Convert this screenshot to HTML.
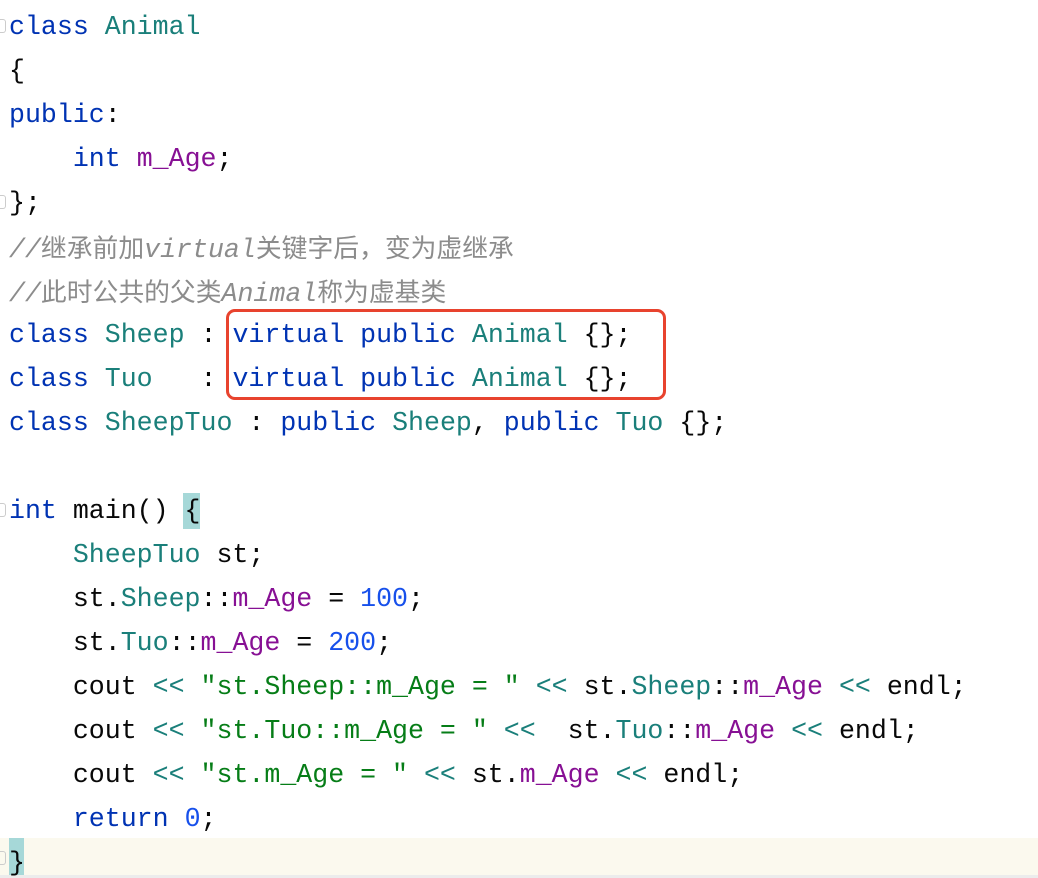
<!DOCTYPE html>
<html><head><meta charset="utf-8"><style>
html,body{margin:0;padding:0;background:#fff;width:1038px;height:878px;overflow:hidden;position:relative}
.code{position:absolute;left:9px;top:5px;font-family:"Liberation Mono","Noto Sans CJK SC",monospace;font-size:26.6px;line-height:44px;color:#080808;white-space:pre}
.l{height:44px}
.k{color:#0033b3}.c{color:#1a7f7a}.m{color:#871094}.n{color:#1750eb}.s{color:#067d17}.o{color:#1a7f7a}
.cm{color:#8c8c8c;font-style:italic}
.cm .z{font-family:"Noto Sans CJK SC",sans-serif;font-style:normal;font-size:25.8px}
.hl{position:absolute;left:0;top:838px;width:1038px;height:37px;background:#fbf9ee}
.bot{position:absolute;left:0;top:875px;width:1038px;height:3px;background:#ececec}
.br{position:absolute;left:9px;top:838px;width:15px;height:37px;background:#a6d8d8}
.br2{position:absolute;left:183px;top:493px;width:17px;height:36px;background:#a6d8d8}
.box{position:absolute;left:226px;top:309px;width:434px;height:85px;border:3px solid #e8432e;border-radius:9px}
.g{position:absolute;left:0;width:5px;height:12px;border:1px solid #ccc;border-left:none;border-radius:0 3px 3px 0}
</style></head><body>
<div class="hl"></div><div class="bot"></div><div class="br"></div><div class="br2"></div>
<div class="g" style="top:19px"></div><div class="g" style="top:195px"></div><div class="g" style="top:503px"></div><div class="g" style="top:851px"></div>
<div class="code"><div class="l"><span class="k">class</span> <span class="c">Animal</span></div><div class="l">{</div><div class="l"><span class="k">public</span>:</div><div class="l">    <span class="k">int</span> <span class="m">m_Age</span>;</div><div class="l">};</div><div class="l cm">//<span class="z">继承前加</span>virtual<span class="z">关键字后，变为虚继承</span></div><div class="l cm">//<span class="z">此时公共的父类</span>Animal<span class="z">称为虚基类</span></div><div class="l"><span class="k">class</span> <span class="c">Sheep</span> : <span class="k">virtual public</span> <span class="c">Animal</span> {};</div><div class="l"><span class="k">class</span> <span class="c">Tuo</span>   : <span class="k">virtual public</span> <span class="c">Animal</span> {};</div><div class="l"><span class="k">class</span> <span class="c">SheepTuo</span> : <span class="k">public</span> <span class="c">Sheep</span>, <span class="k">public</span> <span class="c">Tuo</span> {};</div><div class="l"> </div><div class="l"><span class="k">int</span> main() {</div><div class="l">    <span class="c">SheepTuo</span> st;</div><div class="l">    st.<span class="c">Sheep</span>::<span class="m">m_Age</span> = <span class="n">100</span>;</div><div class="l">    st.<span class="c">Tuo</span>::<span class="m">m_Age</span> = <span class="n">200</span>;</div><div class="l">    cout <span class="o">&lt;&lt;</span> <span class="s">"st.Sheep::m_Age = "</span> <span class="o">&lt;&lt;</span> st.<span class="c">Sheep</span>::<span class="m">m_Age</span> <span class="o">&lt;&lt;</span> endl;</div><div class="l">    cout <span class="o">&lt;&lt;</span> <span class="s">"st.Tuo::m_Age = "</span> <span class="o">&lt;&lt;</span>  st.<span class="c">Tuo</span>::<span class="m">m_Age</span> <span class="o">&lt;&lt;</span> endl;</div><div class="l">    cout <span class="o">&lt;&lt;</span> <span class="s">"st.m_Age = "</span> <span class="o">&lt;&lt;</span> st.<span class="m">m_Age</span> <span class="o">&lt;&lt;</span> endl;</div><div class="l">    <span class="k">return</span> <span class="n">0</span>;</div><div class="l">}</div></div>
<div class="box"></div>
</body></html>
